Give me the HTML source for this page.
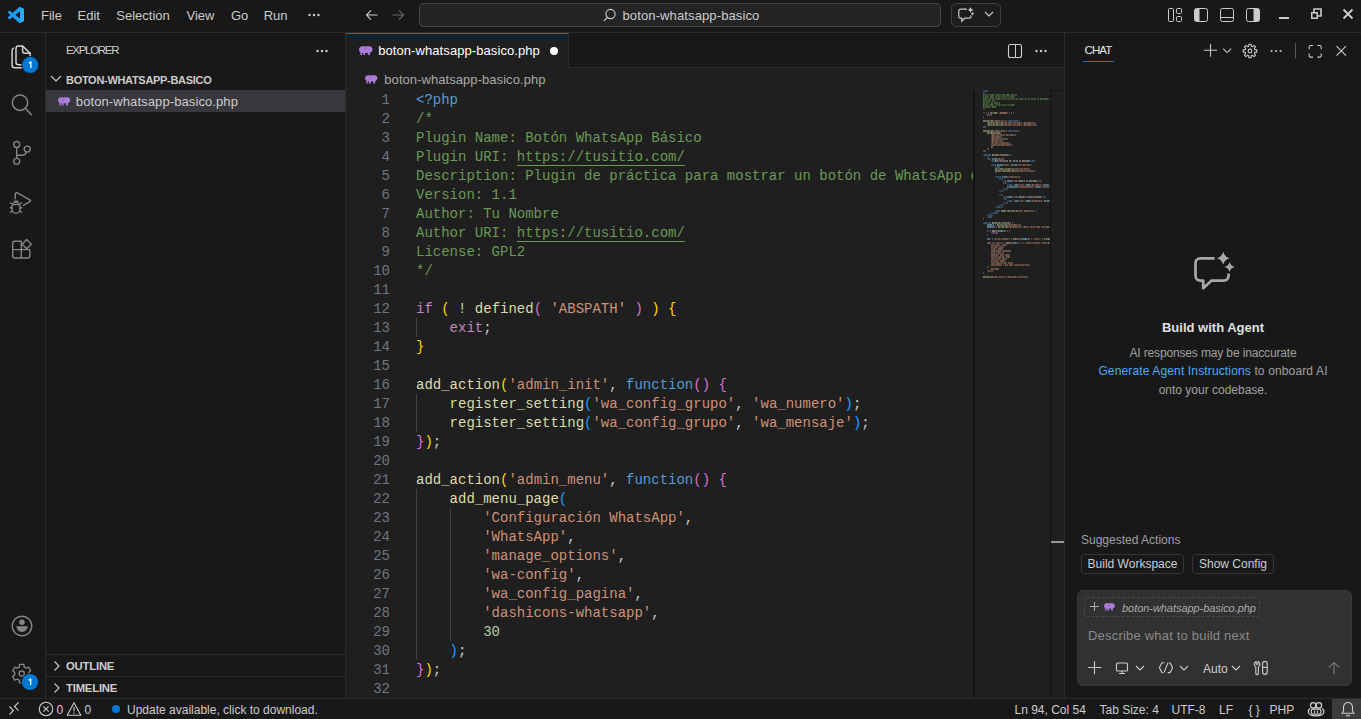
<!DOCTYPE html>
<html><head><meta charset="utf-8"><style>
html,body{margin:0;padding:0}
body{width:1361px;height:719px;overflow:hidden;position:relative;background:#181818;font-family:"Liberation Sans",sans-serif}
.t{position:absolute;white-space:pre;line-height:16px}
.ln{position:absolute;left:346px;width:44px;text-align:right;font-family:"Liberation Mono",monospace;font-size:14px;line-height:19px;color:#6E7681}
.cl{position:absolute;left:0;white-space:pre;font-family:"Liberation Mono",monospace;font-size:14px;line-height:19px;color:#CCCCCC}
</style></head><body>
<div style="position:absolute;left:0;top:0;width:1361px;height:32px;background:#181818"></div>
<div style="position:absolute;left:0;top:32px;width:1361px;height:1px;background:#2B2B2B"></div>
<svg style="position:absolute;left:8px;top:7px" width="16" height="16" viewBox="0 0 100 100"><path fill="#0065A9" d="M96.5 10.8 75.9.9a6.2 6.2 0 0 0-7.1 1.2L29.4 38 12.2 25a4.2 4.2 0 0 0-5.3.2l-5.5 5a4.2 4.2 0 0 0 0 6.2L16.3 50 1.4 63.6a4.2 4.2 0 0 0 0 6.2l5.5 5a4.2 4.2 0 0 0 5.3.2l17.2-13 39.4 35.9a6.2 6.2 0 0 0 7.1 1.2l20.6-9.9a6.2 6.2 0 0 0 3.5-5.6V16.4a6.2 6.2 0 0 0-3.5-5.6zM75 72.7 45.1 50 75 27.3z"/><path fill="#1F9CF0" d="M96.5 10.8 75.9.9a6.2 6.2 0 0 0-7.1 1.2L1.4 63.6a4.2 4.2 0 0 0 0 6.2l5.5 5a4.2 4.2 0 0 0 5.3.2L93.4 12.6A4.2 4.2 0 0 1 100 16v.4a6.2 6.2 0 0 0-3.5-5.6z"/><path fill="#1F9CF0" d="M96.5 89.2 75.9 99.1a6.2 6.2 0 0 1-7.1-1.2L1.4 36.4a4.2 4.2 0 0 1 0-6.2l5.5-5a4.2 4.2 0 0 1 5.3-.2l81.2 62.4A4.2 4.2 0 0 0 100 84v-.4a6.2 6.2 0 0 1-3.5 5.6z"/><path fill="#2AAAF5" d="M75.9 99.1a6.2 6.2 0 0 1-7.1-1.2A3.7 3.7 0 0 0 75 95.3V4.7a3.7 3.7 0 0 0-6.2-2.6 6.2 6.2 0 0 1 7.1-1.2l20.6 9.9a6.2 6.2 0 0 1 3.5 5.6v67.2a6.2 6.2 0 0 1-3.5 5.6z"/></svg>
<div class="t" style="left:41px;top:8px;font-size:13px;color:#CCCCCC;font-weight:400;">File</div>
<div class="t" style="left:77.5px;top:8px;font-size:13px;color:#CCCCCC;font-weight:400;">Edit</div>
<div class="t" style="left:116.3px;top:8px;font-size:13px;color:#CCCCCC;font-weight:400;">Selection</div>
<div class="t" style="left:186.5px;top:8px;font-size:13px;color:#CCCCCC;font-weight:400;">View</div>
<div class="t" style="left:231px;top:8px;font-size:13px;color:#CCCCCC;font-weight:400;">Go</div>
<div class="t" style="left:263.7px;top:8px;font-size:13px;color:#CCCCCC;font-weight:400;">Run</div>
<svg style="position:absolute;left:308px;top:13px" width="12" height="4"><circle cx="1.5" cy="2" r="1.2" fill="#CCC"/><circle cx="6" cy="2" r="1.2" fill="#CCC"/><circle cx="10.5" cy="2" r="1.2" fill="#CCC"/></svg>
<svg style="position:absolute;left:364px;top:7px" width="16" height="16" viewBox="0 0 16 16"><path d="M2.5 8h11M7 3.3 2.5 8 7 12.7" stroke="#CCCCCC" stroke-width="1.1" fill="none"/></svg>
<svg style="position:absolute;left:390px;top:7px" width="16" height="16" viewBox="0 0 16 16"><path d="M2.5 8h11M9 3.3 13.5 8 9 12.7" stroke="#6b6b6b" stroke-width="1.1" fill="none"/></svg>
<div style="position:absolute;left:419px;top:3px;width:520px;height:22px;border:1px solid #454545;border-radius:4.5px;background:#242424"></div>
<svg style="position:absolute;left:603px;top:8px" width="14" height="14" viewBox="0 0 14 14"><circle cx="7.5" cy="6" r="4.6" stroke="#CCCCCC" stroke-width="1.1" fill="none"/><path d="M4.3 9.3 1 12.8" stroke="#CCCCCC" stroke-width="1.2"/></svg>
<div class="t" style="left:622.5px;top:8px;font-size:13px;color:#CCCCCC;font-weight:400;letter-spacing:0.12px">boton-whatsapp-basico</div>
<div style="position:absolute;left:951px;top:3px;width:48px;height:22px;border:1px solid #3f3f3f;border-radius:5px;background:#1d1d1d"></div>
<svg style="position:absolute;left:957px;top:6px" width="18" height="17" viewBox="0 0 18 17"><path d="M10 3.2H3.6c-1.1 0-1.8.7-1.8 1.8v5.4c0 1.1.7 1.8 1.8 1.8h1.2v3l3-3h4.4c1.1 0 1.8-.7 1.8-1.8V9.2" stroke="#CCCCCC" stroke-width="1.2" fill="none"/><path d="M13.5 1l.9 2 2 .9-2 .9-.9 2-.9-2-2-.9 2-.9z M15.5 5.8l.6 1.2 1.2.6-1.2.6-.6 1.2-.6-1.2-1.2-.6 1.2-.6z" fill="#CCCCCC"/></svg>
<svg style="position:absolute;left:984px;top:11px" width="10" height="6" viewBox="0 0 10 6"><path d="M1 1l4 4 4-4" stroke="#CCCCCC" stroke-width="1.1" fill="none"/></svg>
<svg style="position:absolute;left:1167px;top:7px" width="16" height="16" viewBox="0 0 16 16"><rect x="1.5" y="1.5" width="5" height="13" rx="1" stroke="#CCC" fill="none"/><rect x="9.5" y="1.5" width="5" height="5" rx="1" stroke="#CCC" fill="none"/><rect x="9.5" y="9.5" width="5" height="5" rx="1" stroke="#CCC" fill="none"/></svg>
<svg style="position:absolute;left:1193px;top:7px" width="16" height="16" viewBox="0 0 16 16"><rect x="1.5" y="1.5" width="13" height="13" rx="2" stroke="#CCC" fill="none"/><path d="M2 2h4v12H2z" fill="#CCC"/><path d="M6 2v12" stroke="#CCC"/></svg>
<svg style="position:absolute;left:1219px;top:7px" width="16" height="16" viewBox="0 0 16 16"><rect x="1.5" y="1.5" width="13" height="13" rx="2" stroke="#CCC" fill="none"/><path d="M2 10.5h12" stroke="#CCC"/></svg>
<svg style="position:absolute;left:1245px;top:7px" width="16" height="16" viewBox="0 0 16 16"><rect x="1.5" y="1.5" width="13" height="13" rx="2" stroke="#CCC" fill="none"/><path d="M9 2h5v12H9z" fill="#CCC"/><path d="M9 2v12" stroke="#CCC"/></svg>
<div style="position:absolute;left:1279px;top:17px;width:10px;height:2px;background:#CCCCCC"></div>
<svg style="position:absolute;left:1310px;top:8px" width="12" height="12" viewBox="0 0 12 12"><rect x="1" y="4" width="7" height="7" fill="#CCC"/><rect x="2.5" y="5.5" width="4" height="4" fill="#181818"/><path d="M4 4V1h7v7H8" stroke="#CCC" stroke-width="1.6" fill="none"/></svg>
<svg style="position:absolute;left:1342px;top:8px" width="12" height="12" viewBox="0 0 12 12"><path d="M1.5 1.5l9 9M10.5 1.5l-9 9" stroke="#CCC" stroke-width="1.8"/></svg>
<div style="position:absolute;left:45px;top:33px;width:1px;height:665px;background:#2B2B2B"></div>
<svg style="position:absolute;left:0;top:0" width="45" height="719"><path d="M16 48.5a2.5 2.5 0 0 1 2.5-2.5H22.6L30.2 53.4V62.3a2.5 2.5 0 0 1-2.5 2.5H18.5a2.5 2.5 0 0 1-2.5-2.5Z" stroke="#D4D4D4" stroke-width="1.45" fill="none"/><path d="M22.6 46V50.9a2.3 2.3 0 0 0 2.3 2.3H30.2" stroke="#D4D4D4" stroke-width="1.45" fill="none"/><path d="M14 47.9Q12.1 48.5 12.1 50.6V65.3a2.5 2.5 0 0 0 2.5 2.5H24" stroke="#D4D4D4" stroke-width="1.45" fill="none"/><circle cx="30.2" cy="64.9" r="9" fill="#181818"/><circle cx="30.2" cy="64.9" r="8.1" fill="#0078D4"/><circle cx="20" cy="102.7" r="7.7" stroke="#858585" stroke-width="1.5" fill="none"/><path d="M25.4 108.3 31.8 115.2" stroke="#858585" stroke-width="1.6"/><g stroke="#858585" stroke-width="1.35" fill="none"><circle cx="16.7" cy="144.5" r="3"/><circle cx="16.7" cy="161.3" r="3"/><circle cx="27.2" cy="149.1" r="3"/><path d="M16.7 147.5V158.3M16.7 155.2H23.3a3.3 3.3 0 0 0 2.7-3.4"/></g><g stroke="#858585" stroke-width="1.4" fill="none" stroke-linejoin="round"><path d="M15.2 199.2V194.2a1.5 1.5 0 0 1 2.2-1.3L30.2 200.2a.7.7 0 0 1 0 1.2L23 205.6"/><path d="M12 207.3a4 5 0 0 1 8 0v1.8a4 4.3 0 0 1-8 0z"/><path d="M12.3 204.6H19.7M13.8 202.3a2.3 2 0 0 1 4.4 0"/><path d="M12 203.8 10 202.5M20 203.8 22 202.5M12 207.8H9.8M20 207.8H22.2M12.2 211 10 212.6M19.8 211 22 212.6"/></g><g stroke="#858585" stroke-width="1.4" fill="none" stroke-linejoin="round"><path d="M14.7 241.2H21.3V258H14.7a2 2 0 0 1-2-2V243.2a2 2 0 0 1 2-2z"/><path d="M12.7 249.6H29.8V256a2 2 0 0 1-2 2H21.3"/><path d="M26.7 239.6 31.3 244.2 26.7 248.8 22.1 244.2z"/></g><circle cx="22" cy="626" r="9.8" stroke="#858585" stroke-width="1.4" fill="none"/><circle cx="22" cy="622.2" r="2.7" fill="#858585"/><path d="M16.3 626.3H27.7a5.7 5.7 0 0 1-11.4 0z" fill="#858585"/><path d="M19.19 667.06 L19.56 664.34 L23.84 664.34 L24.21 667.06 L26.11 668.16 L28.65 667.12 L30.78 670.82 L28.61 672.50 L28.61 674.70 L30.78 676.38 L28.65 680.08 L26.11 679.04 L24.21 680.14 L23.84 682.86 L19.56 682.86 L19.19 680.14 L17.29 679.04 L14.75 680.08 L12.62 676.38 L14.79 674.70 L14.79 672.50 L12.62 670.82 L14.75 667.12 L17.29 668.16Z" stroke="#858585" stroke-width="1.35" fill="none" stroke-linejoin="round"/><circle cx="21.7" cy="673.6" r="2.6" stroke="#858585" stroke-width="1.35" fill="none"/><circle cx="30" cy="682" r="9" fill="#181818"/><circle cx="30" cy="682" r="8.1" fill="#0078D4"/><path d="M28.9 63.3 30.9 61.9V67.9M28.7 680.4 30.7 679V685" stroke="#FFFFFF" stroke-width="1.3" fill="none" stroke-linejoin="round"/></svg>
<div style="position:absolute;left:345px;top:33px;width:1px;height:665px;background:#2B2B2B"></div>
<div class="t" style="left:66px;top:41.8px;font-size:11.5px;color:#CCCCCC;font-weight:400;letter-spacing:-1.3px">EXPLORER</div>
<svg style="position:absolute;left:316px;top:49px" width="12" height="4"><circle cx="1.5" cy="2" r="1.2" fill="#CCC"/><circle cx="6" cy="2" r="1.2" fill="#CCC"/><circle cx="10.5" cy="2" r="1.2" fill="#CCC"/></svg>
<svg style="position:absolute;left:50px;top:74px" width="12" height="9" viewBox="0 0 12 9"><path d="M1 2l5 5 5-5" stroke="#CCC" stroke-width="1.1" fill="none"/></svg>
<div class="t" style="left:66px;top:72px;font-size:11px;color:#CCCCCC;font-weight:700;letter-spacing:-0.3px">BOTON-WHATSAPP-BASICO</div>
<div style="position:absolute;left:46px;top:90px;width:299px;height:22px;background:#37373D"></div>
<svg style="position:absolute;left:57.5px;top:97.2px" width="12.4" height="8.8" viewBox="0 0 14 10"><path fill="#AC7DD8" d="M3.3.3C1.3.3 0 1.8 0 3.7c0 1.3.6 2.3 1.4 2.8v3.2H3V7.1c.4.2.9.2 1.3.1v2.5h2V7.2h2.9v2.5h2.1V6.9c1.5-.4 2.6-1.6 2.6-3.4C13.9 1.5 12.4.3 10.4.3z"/><path d="M6.3.6C6.6 2 6.2 3.6 5 4.6" stroke="#7C58A6" stroke-width=".7" fill="none"/></svg>
<div class="t" style="left:75.8px;top:94px;font-size:13px;color:#CCCCCC;font-weight:400;letter-spacing:0.1px">boton-whatsapp-basico.php</div>
<div style="position:absolute;left:46px;top:654px;width:299px;height:1px;background:#2B2B2B"></div>
<div style="position:absolute;left:46px;top:676px;width:299px;height:1px;background:#2B2B2B"></div>
<svg style="position:absolute;left:52px;top:660px" width="10" height="12" viewBox="0 0 10 12"><path d="M2.5 1.5l4.5 4.5-4.5 4.5" stroke="#CCC" stroke-width="1.1" fill="none"/></svg>
<svg style="position:absolute;left:52px;top:682px" width="10" height="12" viewBox="0 0 10 12"><path d="M2.5 1.5l4.5 4.5-4.5 4.5" stroke="#CCC" stroke-width="1.1" fill="none"/></svg>
<div class="t" style="left:66px;top:657.8px;font-size:11.3px;color:#CCCCCC;font-weight:700;letter-spacing:-0.2px">OUTLINE</div>
<div class="t" style="left:66px;top:679.8px;font-size:11.3px;color:#CCCCCC;font-weight:700;letter-spacing:-0.2px">TIMELINE</div>
<div style="position:absolute;left:346px;top:33px;width:718px;height:665px;background:#1F1F1F"></div>
<div style="position:absolute;left:346px;top:33px;width:718px;height:34px;background:#181818"></div>
<div style="position:absolute;left:346px;top:67px;width:718px;height:1px;background:#2B2B2B"></div>
<div style="position:absolute;left:346px;top:33px;width:223px;height:35px;background:#1F1F1F;border-right:1px solid #2B2B2B;box-sizing:border-box"></div>
<div style="position:absolute;left:346px;top:33px;width:222px;height:1px;background:#0078D4"></div>
<svg style="position:absolute;left:359px;top:45.8px" width="13.6" height="9.7" viewBox="0 0 14 10"><path fill="#AC7DD8" d="M3.3.3C1.3.3 0 1.8 0 3.7c0 1.3.6 2.3 1.4 2.8v3.2H3V7.1c.4.2.9.2 1.3.1v2.5h2V7.2h2.9v2.5h2.1V6.9c1.5-.4 2.6-1.6 2.6-3.4C13.9 1.5 12.4.3 10.4.3z"/><path d="M6.3.6C6.6 2 6.2 3.6 5 4.6" stroke="#7C58A6" stroke-width=".7" fill="none"/></svg>
<div class="t" style="left:378.2px;top:43px;font-size:13px;color:#FFFFFF;font-weight:400;letter-spacing:0.08px">boton-whatsapp-basico.php</div>
<div style="position:absolute;left:550px;top:47px;width:8px;height:8px;border-radius:4px;background:#FFFFFF"></div>
<svg style="position:absolute;left:1007px;top:43px" width="16" height="16" viewBox="0 0 16 16"><rect x="1.5" y="1.5" width="13" height="13" rx="2" stroke="#CCC" stroke-width="1.1" fill="none"/><path d="M8.5 2v12" stroke="#CCC" stroke-width="1"/></svg>
<svg style="position:absolute;left:1035px;top:49px" width="12" height="4"><circle cx="1.5" cy="2" r="1.2" fill="#CCC"/><circle cx="6" cy="2" r="1.2" fill="#CCC"/><circle cx="10.5" cy="2" r="1.2" fill="#CCC"/></svg>
<svg style="position:absolute;left:365.4px;top:75.2px" width="12.6" height="8.9" viewBox="0 0 14 10"><path fill="#AC7DD8" d="M3.3.3C1.3.3 0 1.8 0 3.7c0 1.3.6 2.3 1.4 2.8v3.2H3V7.1c.4.2.9.2 1.3.1v2.5h2V7.2h2.9v2.5h2.1V6.9c1.5-.4 2.6-1.6 2.6-3.4C13.9 1.5 12.4.3 10.4.3z"/><path d="M6.3.6C6.6 2 6.2 3.6 5 4.6" stroke="#7C58A6" stroke-width=".7" fill="none"/></svg>
<div class="t" style="left:384.3px;top:72px;font-size:13px;color:#A9A9A9;font-weight:400;letter-spacing:0.06px">boton-whatsapp-basico.php</div>
<div class="ln" style="top:91px">1</div>
<div class="ln" style="top:110px">2</div>
<div class="ln" style="top:129px">3</div>
<div class="ln" style="top:148px">4</div>
<div class="ln" style="top:167px">5</div>
<div class="ln" style="top:186px">6</div>
<div class="ln" style="top:205px">7</div>
<div class="ln" style="top:224px">8</div>
<div class="ln" style="top:243px">9</div>
<div class="ln" style="top:262px">10</div>
<div class="ln" style="top:281px">11</div>
<div class="ln" style="top:300px">12</div>
<div class="ln" style="top:319px">13</div>
<div class="ln" style="top:338px">14</div>
<div class="ln" style="top:357px">15</div>
<div class="ln" style="top:376px">16</div>
<div class="ln" style="top:395px">17</div>
<div class="ln" style="top:414px">18</div>
<div class="ln" style="top:433px">19</div>
<div class="ln" style="top:452px">20</div>
<div class="ln" style="top:471px">21</div>
<div class="ln" style="top:490px">22</div>
<div class="ln" style="top:509px">23</div>
<div class="ln" style="top:528px">24</div>
<div class="ln" style="top:547px">25</div>
<div class="ln" style="top:566px">26</div>
<div class="ln" style="top:585px">27</div>
<div class="ln" style="top:604px">28</div>
<div class="ln" style="top:623px">29</div>
<div class="ln" style="top:642px">30</div>
<div class="ln" style="top:661px">31</div>
<div class="ln" style="top:680px">32</div>
<div style="position:absolute;left:416px;top:318px;width:1px;height:19px;background:#404040"></div>
<div style="position:absolute;left:416px;top:394px;width:1px;height:38px;background:#404040"></div>
<div style="position:absolute;left:416px;top:489px;width:1px;height:171px;background:#404040"></div>
<div style="position:absolute;left:450px;top:508px;width:1px;height:133px;background:#404040"></div>
<div style="position:absolute;left:416px;top:91px;width:557px;height:607px;overflow:hidden">
<div class="cl" style="top:0px"><span style="color:#569CD6">&lt;?php</span></div>
<div class="cl" style="top:19px"><span style="color:#6A9955">/*</span></div>
<div class="cl" style="top:38px"><span style="color:#6A9955">Plugin Name: Botón WhatsApp Básico</span></div>
<div class="cl" style="top:57px"><span style="color:#6A9955">Plugin URI: </span><span style="color:#6A9955;text-decoration:underline;text-underline-offset:4px">https://tusitio.com/</span></div>
<div class="cl" style="top:76px"><span style="color:#6A9955">Description: Plugin de práctica para mostrar un botón de WhatsApp con configuración</span></div>
<div class="cl" style="top:95px"><span style="color:#6A9955">Version: 1.1</span></div>
<div class="cl" style="top:114px"><span style="color:#6A9955">Author: Tu Nombre</span></div>
<div class="cl" style="top:133px"><span style="color:#6A9955">Author URI: </span><span style="color:#6A9955;text-decoration:underline;text-underline-offset:4px">https://tusitio.com/</span></div>
<div class="cl" style="top:152px"><span style="color:#6A9955">License: GPL2</span></div>
<div class="cl" style="top:171px"><span style="color:#6A9955">*/</span></div>
<div class="cl" style="top:190px"></div>
<div class="cl" style="top:209px"><span style="color:#C586C0">if</span><span style="color:#CCCCCC"> </span><span style="color:#FFD700">(</span><span style="color:#CCCCCC"> ! </span><span style="color:#DCDCAA">defined</span><span style="color:#DA70D6">(</span><span style="color:#CE9178"> &#x27;ABSPATH&#x27; </span><span style="color:#DA70D6">)</span><span style="color:#CCCCCC"> </span><span style="color:#FFD700">)</span><span style="color:#CCCCCC"> </span><span style="color:#FFD700">{</span></div>
<div class="cl" style="top:228px"><span style="color:#CCCCCC">    </span><span style="color:#C586C0">exit</span><span style="color:#CCCCCC">;</span></div>
<div class="cl" style="top:247px"><span style="color:#FFD700">}</span></div>
<div class="cl" style="top:266px"></div>
<div class="cl" style="top:285px"><span style="color:#DCDCAA">add_action</span><span style="color:#FFD700">(</span><span style="color:#CE9178">&#x27;admin_init&#x27;</span><span style="color:#CCCCCC">, </span><span style="color:#569CD6">function</span><span style="color:#DA70D6">()</span><span style="color:#CCCCCC"> </span><span style="color:#DA70D6">{</span></div>
<div class="cl" style="top:304px"><span style="color:#DCDCAA">    register_setting</span><span style="color:#179FFF">(</span><span style="color:#CE9178">&#x27;wa_config_grupo&#x27;</span><span style="color:#CCCCCC">, </span><span style="color:#CE9178">&#x27;wa_numero&#x27;</span><span style="color:#179FFF">)</span><span style="color:#CCCCCC">;</span></div>
<div class="cl" style="top:323px"><span style="color:#DCDCAA">    register_setting</span><span style="color:#179FFF">(</span><span style="color:#CE9178">&#x27;wa_config_grupo&#x27;</span><span style="color:#CCCCCC">, </span><span style="color:#CE9178">&#x27;wa_mensaje&#x27;</span><span style="color:#179FFF">)</span><span style="color:#CCCCCC">;</span></div>
<div class="cl" style="top:342px"><span style="color:#DA70D6">}</span><span style="color:#FFD700">)</span><span style="color:#CCCCCC">;</span></div>
<div class="cl" style="top:361px"></div>
<div class="cl" style="top:380px"><span style="color:#DCDCAA">add_action</span><span style="color:#FFD700">(</span><span style="color:#CE9178">&#x27;admin_menu&#x27;</span><span style="color:#CCCCCC">, </span><span style="color:#569CD6">function</span><span style="color:#DA70D6">()</span><span style="color:#CCCCCC"> </span><span style="color:#DA70D6">{</span></div>
<div class="cl" style="top:399px"><span style="color:#DCDCAA">    add_menu_page</span><span style="color:#179FFF">(</span></div>
<div class="cl" style="top:418px"><span style="color:#CE9178">        &#x27;Configuración WhatsApp&#x27;</span><span style="color:#CCCCCC">,</span></div>
<div class="cl" style="top:437px"><span style="color:#CE9178">        &#x27;WhatsApp&#x27;</span><span style="color:#CCCCCC">,</span></div>
<div class="cl" style="top:456px"><span style="color:#CE9178">        &#x27;manage_options&#x27;</span><span style="color:#CCCCCC">,</span></div>
<div class="cl" style="top:475px"><span style="color:#CE9178">        &#x27;wa-config&#x27;</span><span style="color:#CCCCCC">,</span></div>
<div class="cl" style="top:494px"><span style="color:#CE9178">        &#x27;wa_config_pagina&#x27;</span><span style="color:#CCCCCC">,</span></div>
<div class="cl" style="top:513px"><span style="color:#CE9178">        &#x27;dashicons-whatsapp&#x27;</span><span style="color:#CCCCCC">,</span></div>
<div class="cl" style="top:532px"><span style="color:#CCCCCC">        </span><span style="color:#B5CEA8">30</span></div>
<div class="cl" style="top:551px"><span style="color:#CCCCCC">    </span><span style="color:#179FFF">)</span><span style="color:#CCCCCC">;</span></div>
<div class="cl" style="top:570px"><span style="color:#DA70D6">}</span><span style="color:#FFD700">)</span><span style="color:#CCCCCC">;</span></div>
<div class="cl" style="top:589px"></div>
</div>
<div style="position:absolute;left:973px;top:90px;width:2px;height:608px;background:linear-gradient(to right,rgba(0,0,0,0.2),rgba(0,0,0,0.6))"></div>
<svg style="position:absolute;left:0;top:0" width="1361" height="719"><path d="M983 90h2v2h-2zM1008 120h1v2h-1zM1012 120h2v2h-2zM1008 130h1v2h-1zM1012 130h2v2h-2zM983 154h1v2h-1zM987 154h2v2h-2zM987 156h2v2h-2zM987 158h1v2h-1zM989 158h1v2h-1zM991 160h1v2h-1zM1030 160h2v2h-2zM991 164h2v2h-2zM994 164h1v2h-1zM995 166h2v2h-2zM995 172h2v2h-2zM995 176h2v2h-2zM999 176h1v2h-1zM999 178h3v2h-3zM1003 180h2v2h-2zM1037 180h3v2h-3zM1003 182h2v2h-2zM1007 184h2v2h-2zM1012 184h1v2h-1zM1003 188h3v2h-3zM999 190h4v2h-4zM999 194h3v2h-3zM1003 196h2v2h-2zM1041 196h3v2h-3zM1003 198h2v2h-2zM1007 200h2v2h-2zM1012 200h1v2h-1zM1003 202h3v2h-3zM999 204h4v2h-4zM995 206h3v2h-3zM1000 206h1v2h-1zM995 210h2v2h-2zM1035 210h2v2h-2zM991 212h3v2h-3zM995 212h1v2h-1zM987 214h2v2h-2zM990 214h1v2h-1zM987 216h2v2h-2zM983 222h1v2h-1zM987 222h2v2h-2z" fill="#569CD6" fill-opacity="0.26"/><path d="M985 90h3v2h-3zM1009 120h3v2h-3zM1014 120h2v2h-2zM1009 130h3v2h-3zM1014 130h2v2h-2zM984 154h3v2h-3zM989 154h2v2h-2zM988 158h1v2h-1zM990 158h1v2h-1zM992 160h2v2h-2zM1032 160h2v2h-2zM993 164h1v2h-1zM997 166h3v2h-3zM997 176h2v2h-2zM1000 176h1v2h-1zM1005 180h1v2h-1zM1040 180h1v2h-1zM1005 182h1v2h-1zM1009 184h3v2h-3zM1006 188h1v2h-1zM1005 196h1v2h-1zM1044 196h1v2h-1zM1005 198h1v2h-1zM1009 200h3v2h-3zM1006 202h1v2h-1zM998 206h2v2h-2zM1001 206h1v2h-1zM997 210h3v2h-3zM994 212h1v2h-1zM989 214h1v2h-1zM991 214h1v2h-1zM989 216h3v2h-3zM984 222h3v2h-3zM989 222h2v2h-2z" fill="#569CD6" fill-opacity="0.42"/><path d="M983 92h2v2h-2zM984 94h1v2h-1zM987 94h1v2h-1zM994 94h1v2h-1zM998 94h1v2h-1zM1005 94h1v2h-1zM1014 94h1v2h-1zM984 96h1v2h-1zM987 96h1v2h-1zM993 96h1v2h-1zM996 96h2v2h-2zM1000 96h4v2h-4zM1006 96h3v2h-3zM1010 96h1v2h-1zM1014 96h1v2h-1zM987 98h2v2h-2zM990 98h2v2h-2zM994 98h1v2h-1zM997 98h1v2h-1zM1000 98h1v2h-1zM1007 98h1v2h-1zM1010 98h2v2h-2zM1017 98h1v2h-1zM1023 98h2v2h-2zM1026 98h1v2h-1zM1033 98h1v2h-1zM1043 98h1v2h-1zM985 100h1v2h-1zM987 100h1v2h-1zM990 100h1v2h-1zM993 100h1v2h-1zM985 102h1v2h-1zM988 102h2v2h-2zM998 102h1v2h-1zM985 104h1v2h-1zM988 104h1v2h-1zM993 104h1v2h-1zM996 104h2v2h-2zM1000 104h4v2h-4zM1006 104h3v2h-3zM1010 104h1v2h-1zM1014 104h1v2h-1zM984 106h1v2h-1zM990 106h1v2h-1zM983 108h2v2h-2z" fill="#6A9955" fill-opacity="0.26"/><path d="M983 94h1v2h-1zM990 94h1v2h-1zM992 94h1v2h-1zM996 94h1v2h-1zM1002 94h1v2h-1zM1007 94h1v2h-1zM1011 94h1v2h-1zM983 96h1v2h-1zM990 96h3v2h-3zM1013 96h1v2h-1zM983 98h1v2h-1zM996 98h1v2h-1zM1020 98h1v2h-1zM1040 98h1v2h-1zM1045 98h1v2h-1zM983 100h1v2h-1zM983 102h1v2h-1zM991 102h1v2h-1zM994 102h1v2h-1zM996 102h1v2h-1zM983 104h1v2h-1zM990 104h3v2h-3zM1013 104h1v2h-1zM983 106h1v2h-1zM992 106h3v2h-3z" fill="#6A9955" fill-opacity="0.55"/><path d="M985 94h2v2h-2zM988 94h1v2h-1zM991 94h1v2h-1zM993 94h1v2h-1zM997 94h1v2h-1zM999 94h2v2h-2zM1003 94h2v2h-2zM1006 94h1v2h-1zM1008 94h2v2h-2zM1012 94h2v2h-2zM1015 94h2v2h-2zM985 96h2v2h-2zM988 96h1v2h-1zM995 96h1v2h-1zM998 96h2v2h-2zM1004 96h2v2h-2zM1009 96h1v2h-1zM1011 96h2v2h-2zM984 98h3v2h-3zM989 98h1v2h-1zM992 98h2v2h-2zM998 98h2v2h-2zM1001 98h1v2h-1zM1003 98h2v2h-2zM1006 98h1v2h-1zM1008 98h2v2h-2zM1012 98h2v2h-2zM1015 98h2v2h-2zM1018 98h1v2h-1zM1021 98h2v2h-2zM1025 98h1v2h-1zM1028 98h2v2h-2zM1031 98h2v2h-2zM1034 98h2v2h-2zM1037 98h2v2h-2zM1041 98h2v2h-2zM1044 98h1v2h-1zM1046 98h2v2h-2zM1049 98h1v2h-1zM984 100h1v2h-1zM986 100h1v2h-1zM988 100h2v2h-2zM992 100h1v2h-1zM994 100h1v2h-1zM984 102h1v2h-1zM986 102h2v2h-2zM992 102h1v2h-1zM995 102h1v2h-1zM997 102h1v2h-1zM999 102h1v2h-1zM984 104h1v2h-1zM986 104h2v2h-2zM995 104h1v2h-1zM998 104h2v2h-2zM1004 104h2v2h-2zM1009 104h1v2h-1zM1011 104h2v2h-2zM985 106h5v2h-5zM995 106h1v2h-1z" fill="#6A9955" fill-opacity="0.42"/><path d="M983 112h2v2h-2zM989 114h2v2h-2zM987 230h2v2h-2zM991 232h1v2h-1zM993 232h1v2h-1zM995 232h1v2h-1z" fill="#C586C0" fill-opacity="0.26"/><path d="M986 112h1v2h-1zM988 112h1v2h-1zM997 112h1v2h-1zM1009 112h1v2h-1zM1011 112h1v2h-1zM1013 112h1v2h-1zM991 114h1v2h-1zM983 116h1v2h-1zM993 120h1v2h-1zM1006 120h1v2h-1zM1016 120h2v2h-2zM1019 120h1v2h-1zM1003 122h1v2h-1zM1021 122h1v2h-1zM1034 122h2v2h-2zM1003 124h1v2h-1zM1021 124h1v2h-1zM1035 124h2v2h-2zM983 126h3v2h-3zM993 130h1v2h-1zM1006 130h1v2h-1zM1016 130h2v2h-2zM1019 130h1v2h-1zM1000 132h1v2h-1zM1015 134h1v2h-1zM1001 136h1v2h-1zM1007 138h1v2h-1zM1002 140h1v2h-1zM1009 142h1v2h-1zM1011 144h1v2h-1zM987 148h2v2h-2zM983 150h3v2h-3zM1008 154h2v2h-2zM1011 154h1v2h-1zM997 158h1v2h-1zM998 160h2v2h-2zM1002 160h1v2h-1zM1005 160h1v2h-1zM1011 160h1v2h-1zM1015 160h1v2h-1zM1025 160h1v2h-1zM1003 164h1v2h-1zM1017 164h1v2h-1zM1010 168h1v2h-1zM1028 168h2v2h-2zM1015 170h1v2h-1zM1033 170h2v2h-2zM1007 176h1v2h-1zM1012 180h1v2h-1zM1023 180h1v2h-1zM1032 180h1v2h-1zM1018 184h1v2h-1zM1030 184h1v2h-1zM1048 184h1v2h-1zM1018 186h1v2h-1zM1040 186h1v2h-1zM1012 196h1v2h-1zM1024 196h1v2h-1zM1028 196h1v2h-1zM1032 196h1v2h-1zM1034 196h1v2h-1zM1036 196h1v2h-1zM1018 200h1v2h-1zM1030 200h1v2h-1zM1049 200h1v2h-1zM1014 210h1v2h-1zM1032 210h2v2h-2zM983 218h1v2h-1zM1009 222h2v2h-2zM1012 222h1v2h-1zM995 224h1v2h-1zM1007 224h1v2h-1zM1019 224h2v2h-2zM996 226h1v2h-1zM1008 226h1v2h-1zM1021 226h1v2h-1zM990 230h1v2h-1zM997 230h1v2h-1zM1005 230h1v2h-1zM1007 230h1v2h-1zM1009 230h1v2h-1zM997 232h1v2h-1zM987 234h1v2h-1zM992 238h1v2h-1zM1011 238h1v2h-1zM1021 238h1v2h-1zM1029 238h1v2h-1zM1031 238h1v2h-1zM1042 238h1v2h-1zM1004 242h1v2h-1zM1013 242h1v2h-1zM1018 242h1v2h-1zM1020 242h1v2h-1zM1006 244h1v2h-1zM1003 246h1v2h-1zM1002 248h1v2h-1zM1010 250h1v2h-1zM1003 252h1v2h-1zM1009 254h1v2h-1zM1009 256h1v2h-1zM1006 258h1v2h-1zM1004 260h1v2h-1zM1012 262h1v2h-1zM1029 264h1v2h-1zM992 270h1v2h-1zM983 272h1v2h-1zM993 276h1v2h-1zM1005 276h1v2h-1zM1026 276h2v2h-2z" fill="#CCCCCC" fill-opacity="0.26"/><path d="M990 112h2v2h-2zM994 112h3v2h-3zM983 120h3v2h-3zM987 120h2v2h-2zM991 120h2v2h-2zM988 122h2v2h-2zM991 122h1v2h-1zM993 122h1v2h-1zM996 122h2v2h-2zM1001 122h2v2h-2zM988 124h2v2h-2zM991 124h1v2h-1zM993 124h1v2h-1zM996 124h2v2h-2zM1001 124h2v2h-2zM983 130h3v2h-3zM987 130h2v2h-2zM991 130h2v2h-2zM987 132h3v2h-3zM992 132h3v2h-3zM996 132h4v2h-4zM993 154h1v2h-1zM995 154h3v2h-3zM1000 154h1v2h-1zM1002 154h3v2h-3zM1006 154h2v2h-2zM995 168h2v2h-2zM1000 168h3v2h-3zM1006 168h1v2h-1zM1008 168h2v2h-2zM995 170h2v2h-2zM998 170h2v2h-2zM1003 170h3v2h-3zM1007 170h3v2h-3zM1012 170h3v2h-3zM1001 210h3v2h-3zM1008 210h2v2h-2zM1012 210h2v2h-2zM993 222h1v2h-1zM995 222h2v2h-2zM998 222h2v2h-2zM1003 222h1v2h-1zM1005 222h2v2h-2zM1008 222h1v2h-1zM997 224h2v2h-2zM1001 224h2v2h-2zM1005 224h2v2h-2zM998 226h2v2h-2zM1002 226h2v2h-2zM1006 226h2v2h-2zM992 230h1v2h-1zM994 230h1v2h-1zM996 230h1v2h-1zM1013 238h3v2h-3zM1017 238h1v2h-1zM1044 238h1v2h-1zM1047 238h3v2h-3zM1006 242h3v2h-3zM1010 242h1v2h-1zM983 276h3v2h-3zM987 276h2v2h-2zM991 276h2v2h-2z" fill="#DCDCAA" fill-opacity="0.42"/><path d="M992 112h2v2h-2zM986 120h1v2h-1zM989 120h2v2h-2zM987 122h1v2h-1zM990 122h1v2h-1zM992 122h1v2h-1zM994 122h2v2h-2zM998 122h3v2h-3zM987 124h1v2h-1zM990 124h1v2h-1zM992 124h1v2h-1zM994 124h2v2h-2zM998 124h3v2h-3zM986 130h1v2h-1zM989 130h2v2h-2zM990 132h1v2h-1zM995 132h1v2h-1zM994 154h1v2h-1zM998 154h2v2h-2zM1001 154h1v2h-1zM1005 154h1v2h-1zM997 168h3v2h-3zM1003 168h3v2h-3zM1007 168h1v2h-1zM997 170h1v2h-1zM1000 170h3v2h-3zM1006 170h1v2h-1zM1010 170h2v2h-2zM1005 210h3v2h-3zM1010 210h2v2h-2zM994 222h1v2h-1zM997 222h1v2h-1zM1000 222h3v2h-3zM1004 222h1v2h-1zM1007 222h1v2h-1zM999 224h2v2h-2zM1003 224h2v2h-2zM1000 226h2v2h-2zM1004 226h2v2h-2zM995 230h1v2h-1zM1016 238h1v2h-1zM1018 238h3v2h-3zM1045 238h2v2h-2zM1009 242h1v2h-1zM1011 242h2v2h-2zM986 276h1v2h-1zM989 276h2v2h-2z" fill="#DCDCAA" fill-opacity="0.26"/><path d="M999 112h1v2h-1zM1007 112h1v2h-1zM994 120h1v2h-1zM998 120h1v2h-1zM1000 120h2v2h-2zM1003 120h3v2h-3zM1004 122h1v2h-1zM1007 122h1v2h-1zM1011 122h2v2h-2zM1014 122h1v2h-1zM1016 122h1v2h-1zM1020 122h1v2h-1zM1023 122h1v2h-1zM1026 122h1v2h-1zM1031 122h1v2h-1zM1033 122h1v2h-1zM1004 124h1v2h-1zM1007 124h1v2h-1zM1011 124h2v2h-2zM1014 124h1v2h-1zM1016 124h1v2h-1zM1020 124h1v2h-1zM1023 124h1v2h-1zM1026 124h1v2h-1zM1032 124h1v2h-1zM1034 124h1v2h-1zM994 130h1v2h-1zM998 130h1v2h-1zM1000 130h1v2h-1zM1005 130h1v2h-1zM991 134h1v2h-1zM995 134h2v2h-2zM999 134h1v2h-1zM1002 134h1v2h-1zM1009 134h1v2h-1zM1014 134h1v2h-1zM991 136h1v2h-1zM995 136h1v2h-1zM1000 136h1v2h-1zM991 138h1v2h-1zM998 138h1v2h-1zM1001 138h2v2h-2zM1006 138h1v2h-1zM991 140h1v2h-1zM994 140h1v2h-1zM998 140h2v2h-2zM1001 140h1v2h-1zM991 142h1v2h-1zM994 142h1v2h-1zM998 142h2v2h-2zM1001 142h1v2h-1zM1005 142h1v2h-1zM1008 142h1v2h-1zM991 144h1v2h-1zM996 144h1v2h-1zM1001 144h1v2h-1zM1005 144h1v2h-1zM1010 144h1v2h-1zM998 158h1v2h-1zM1000 158h1v2h-1zM1003 158h1v2h-1zM1004 164h1v2h-1zM1008 164h2v2h-2zM1018 164h1v2h-1zM1021 164h2v2h-2zM1026 164h1v2h-1zM1030 164h1v2h-1zM1011 168h1v2h-1zM1014 168h1v2h-1zM1018 168h2v2h-2zM1021 168h1v2h-1zM1023 168h1v2h-1zM1027 168h1v2h-1zM1016 170h1v2h-1zM1019 170h1v2h-1zM1023 170h2v2h-2zM1026 170h1v2h-1zM1028 170h1v2h-1zM1032 170h1v2h-1zM1008 176h2v2h-2zM1011 176h1v2h-1zM1013 176h2v2h-2zM1017 176h1v2h-1zM1019 176h1v2h-1zM1013 180h2v2h-2zM1017 180h1v2h-1zM1019 184h2v2h-2zM1023 184h2v2h-2zM1031 184h1v2h-1zM1034 184h1v2h-1zM1039 184h1v2h-1zM1041 184h1v2h-1zM1049 184h1v2h-1zM1019 186h1v2h-1zM1033 186h1v2h-1zM1041 186h2v2h-2zM1046 186h1v2h-1zM1048 186h2v2h-2zM1013 196h2v2h-2zM1017 196h1v2h-1zM1019 200h2v2h-2zM1023 200h2v2h-2zM1031 200h1v2h-1zM1034 200h1v2h-1zM1040 200h1v2h-1zM1042 200h1v2h-1zM1015 210h1v2h-1zM1019 210h1v2h-1zM1022 210h1v2h-1zM1028 210h1v2h-1zM1031 210h1v2h-1zM1008 224h1v2h-1zM1011 224h1v2h-1zM1016 224h1v2h-1zM1018 224h1v2h-1zM1009 226h1v2h-1zM1012 226h1v2h-1zM1018 226h1v2h-1zM1020 226h1v2h-1zM1023 226h1v2h-1zM1026 226h1v2h-1zM1028 226h1v2h-1zM1032 226h1v2h-1zM1034 226h1v2h-1zM1041 226h1v2h-1zM1043 226h1v2h-1zM1045 226h1v2h-1zM1049 226h1v2h-1zM994 238h1v2h-1zM996 238h2v2h-2zM1000 238h3v2h-3zM1005 238h1v2h-1zM1008 238h2v2h-2zM1033 238h3v2h-3zM1038 238h3v2h-3zM992 242h2v2h-2zM997 242h1v2h-1zM999 242h4v2h-4zM1022 242h2v2h-2zM1025 242h1v2h-1zM1027 242h1v2h-1zM1030 242h4v2h-4zM1035 242h1v2h-1zM1039 242h1v2h-1zM1042 242h1v2h-1zM1046 242h2v2h-2zM994 244h3v2h-3zM999 244h1v2h-1zM1001 244h2v2h-2zM993 246h2v2h-2zM997 246h1v2h-1zM991 248h2v2h-2zM995 248h2v2h-2zM996 250h1v2h-1zM1001 250h1v2h-1zM993 252h1v2h-1zM995 252h2v2h-2zM1000 252h2v2h-2zM995 254h1v2h-1zM998 254h1v2h-1zM993 256h1v2h-1zM996 256h3v2h-3zM1001 256h1v2h-1zM1004 256h1v2h-1zM991 258h1v2h-1zM994 258h2v2h-2zM997 258h1v2h-1zM1000 258h1v2h-1zM992 260h2v2h-2zM998 260h1v2h-1zM991 262h1v2h-1zM994 262h2v2h-2zM1000 262h1v2h-1zM1002 262h2v2h-2zM1006 262h1v2h-1zM994 264h1v2h-1zM1001 264h1v2h-1zM1014 264h1v2h-1zM1018 264h1v2h-1zM1020 264h1v2h-1zM1022 264h1v2h-1zM1024 264h1v2h-1zM1026 264h1v2h-1zM1028 264h1v2h-1zM987 266h2v2h-2zM994 268h1v2h-1zM987 270h2v2h-2zM990 270h2v2h-2zM994 276h1v2h-1zM997 276h2v2h-2zM1001 276h1v2h-1zM1003 276h2v2h-2zM1007 276h1v2h-1zM1010 276h1v2h-1zM1013 276h1v2h-1zM1016 276h3v2h-3zM1020 276h1v2h-1zM1023 276h1v2h-1zM1025 276h1v2h-1z" fill="#CE9178" fill-opacity="0.26"/><path d="M1000 112h7v2h-7zM997 120h1v2h-1zM1005 122h1v2h-1zM1024 122h1v2h-1zM1029 122h1v2h-1zM1005 124h1v2h-1zM1024 124h1v2h-1zM1027 124h1v2h-1zM997 130h1v2h-1zM1001 130h1v2h-1zM992 134h1v2h-1zM1006 134h1v2h-1zM1011 134h1v2h-1zM992 136h1v2h-1zM997 136h1v2h-1zM992 138h1v2h-1zM992 140h1v2h-1zM992 142h1v2h-1zM1002 144h1v2h-1zM999 158h1v2h-1zM1012 168h1v2h-1zM1017 170h1v2h-1zM1012 176h1v2h-1zM1016 180h1v2h-1zM1032 184h1v2h-1zM1037 184h1v2h-1zM1016 196h1v2h-1zM1032 200h1v2h-1zM1035 200h1v2h-1zM1016 210h1v2h-1zM1026 210h1v2h-1zM1009 224h1v2h-1zM1014 224h1v2h-1zM1010 226h1v2h-1zM1013 226h1v2h-1zM1024 226h1v2h-1zM1037 226h1v2h-1zM1046 226h1v2h-1zM1003 238h1v2h-1zM1006 238h1v2h-1zM1048 242h1v2h-1zM996 246h1v2h-1zM1003 250h1v2h-1zM1006 250h1v2h-1zM998 252h1v2h-1zM1008 256h1v2h-1zM1000 264h1v2h-1zM991 268h1v2h-1zM996 268h1v2h-1zM995 276h1v2h-1zM1008 276h1v2h-1z" fill="#CE9178" fill-opacity="0.55"/><path d="M987 114h2v2h-2zM992 232h1v2h-1zM994 232h1v2h-1zM996 232h1v2h-1zM987 242h4v2h-4z" fill="#C586C0" fill-opacity="0.42"/><path d="M995 120h2v2h-2zM999 120h1v2h-1zM1002 120h1v2h-1zM1006 122h1v2h-1zM1008 122h3v2h-3zM1013 122h1v2h-1zM1015 122h1v2h-1zM1017 122h3v2h-3zM1025 122h1v2h-1zM1027 122h2v2h-2zM1030 122h1v2h-1zM1032 122h1v2h-1zM1006 124h1v2h-1zM1008 124h3v2h-3zM1013 124h1v2h-1zM1015 124h1v2h-1zM1017 124h3v2h-3zM1025 124h1v2h-1zM1028 124h4v2h-4zM1033 124h1v2h-1zM995 130h2v2h-2zM999 130h1v2h-1zM1002 130h3v2h-3zM993 134h2v2h-2zM997 134h2v2h-2zM1000 134h2v2h-2zM1003 134h2v2h-2zM1007 134h2v2h-2zM1010 134h1v2h-1zM1012 134h2v2h-2zM993 136h2v2h-2zM996 136h1v2h-1zM998 136h2v2h-2zM993 138h5v2h-5zM999 138h2v2h-2zM1003 138h3v2h-3zM993 140h1v2h-1zM995 140h3v2h-3zM1000 140h1v2h-1zM993 142h1v2h-1zM995 142h3v2h-3zM1000 142h1v2h-1zM1002 142h3v2h-3zM1006 142h2v2h-2zM992 144h4v2h-4zM997 144h4v2h-4zM1003 144h2v2h-2zM1006 144h4v2h-4zM1001 158h2v2h-2zM1005 164h3v2h-3zM1019 164h2v2h-2zM1023 164h3v2h-3zM1027 164h3v2h-3zM1013 168h1v2h-1zM1015 168h3v2h-3zM1020 168h1v2h-1zM1022 168h1v2h-1zM1024 168h3v2h-3zM1018 170h1v2h-1zM1020 170h3v2h-3zM1025 170h1v2h-1zM1027 170h1v2h-1zM1029 170h3v2h-3zM1010 176h1v2h-1zM1015 176h2v2h-2zM1018 176h1v2h-1zM1015 180h1v2h-1zM1021 184h2v2h-2zM1033 184h1v2h-1zM1035 184h2v2h-2zM1038 184h1v2h-1zM1040 184h1v2h-1zM1020 186h13v2h-13zM1043 186h3v2h-3zM1047 186h1v2h-1zM1015 196h1v2h-1zM1021 200h2v2h-2zM1033 200h1v2h-1zM1036 200h4v2h-4zM1041 200h1v2h-1zM1017 210h2v2h-2zM1020 210h2v2h-2zM1024 210h2v2h-2zM1027 210h1v2h-1zM1029 210h2v2h-2zM1010 224h1v2h-1zM1012 224h2v2h-2zM1015 224h1v2h-1zM1017 224h1v2h-1zM1011 226h1v2h-1zM1014 226h4v2h-4zM1019 226h1v2h-1zM1025 226h1v2h-1zM1027 226h1v2h-1zM1030 226h2v2h-2zM1033 226h1v2h-1zM1035 226h1v2h-1zM1038 226h2v2h-2zM1042 226h1v2h-1zM1044 226h1v2h-1zM1047 226h2v2h-2zM995 238h1v2h-1zM998 238h2v2h-2zM1004 238h1v2h-1zM1007 238h1v2h-1zM1036 238h2v2h-2zM994 242h1v2h-1zM996 242h1v2h-1zM998 242h1v2h-1zM1026 242h1v2h-1zM1028 242h2v2h-2zM1034 242h1v2h-1zM1036 242h3v2h-3zM1041 242h1v2h-1zM1043 242h3v2h-3zM1049 242h1v2h-1zM991 244h3v2h-3zM997 244h2v2h-2zM1003 244h3v2h-3zM991 246h2v2h-2zM995 246h1v2h-1zM999 246h4v2h-4zM993 248h2v2h-2zM998 248h4v2h-4zM991 250h5v2h-5zM997 250h4v2h-4zM1004 250h2v2h-2zM1007 250h3v2h-3zM991 252h2v2h-2zM994 252h1v2h-1zM999 252h1v2h-1zM1002 252h1v2h-1zM991 254h4v2h-4zM996 254h2v2h-2zM1000 254h4v2h-4zM1005 254h4v2h-4zM991 256h2v2h-2zM994 256h2v2h-2zM999 256h2v2h-2zM1002 256h2v2h-2zM1006 256h2v2h-2zM992 258h2v2h-2zM996 258h1v2h-1zM998 258h2v2h-2zM1002 258h4v2h-4zM991 260h1v2h-1zM994 260h4v2h-4zM1000 260h4v2h-4zM992 262h2v2h-2zM996 262h4v2h-4zM1001 262h1v2h-1zM1004 262h2v2h-2zM1008 262h4v2h-4zM991 264h3v2h-3zM995 264h5v2h-5zM1003 264h1v2h-1zM1005 264h3v2h-3zM1009 264h4v2h-4zM1015 264h3v2h-3zM1019 264h1v2h-1zM1021 264h1v2h-1zM1023 264h1v2h-1zM1025 264h1v2h-1zM1027 264h1v2h-1zM992 268h2v2h-2zM995 268h1v2h-1zM997 268h2v2h-2zM989 270h1v2h-1zM996 276h1v2h-1zM999 276h2v2h-2zM1002 276h1v2h-1zM1009 276h1v2h-1zM1011 276h2v2h-2zM1014 276h2v2h-2zM1019 276h1v2h-1zM1021 276h2v2h-2zM1024 276h1v2h-1z" fill="#CE9178" fill-opacity="0.42"/><path d="M991 132h1v2h-1zM992 154h1v2h-1zM1004 210h1v2h-1zM992 222h1v2h-1zM993 230h1v2h-1z" fill="#DCDCAA" fill-opacity="0.55"/><path d="M991 146h2v2h-2z" fill="#B5CEA8" fill-opacity="0.42"/><path d="M992 158h1v2h-1zM994 158h3v2h-3zM998 164h1v2h-1zM1000 164h3v2h-3zM1011 164h2v2h-2zM1015 164h2v2h-2zM1002 176h1v2h-1zM1004 176h3v2h-3zM1007 180h5v2h-5zM1015 184h3v2h-3zM1026 184h2v2h-2zM1029 184h1v2h-1zM1043 184h2v2h-2zM1046 184h2v2h-2zM1007 186h1v2h-1zM1009 186h5v2h-5zM1015 186h2v2h-2zM1035 186h1v2h-1zM1037 186h3v2h-3zM1007 196h5v2h-5zM1015 200h3v2h-3zM1026 200h2v2h-2zM1029 200h1v2h-1zM1044 200h2v2h-2zM1047 200h2v2h-2zM987 224h3v2h-3zM991 224h1v2h-1zM993 224h1v2h-1zM987 226h1v2h-1zM989 226h4v2h-4zM994 226h1v2h-1zM998 230h3v2h-3zM1002 230h1v2h-1zM1004 230h1v2h-1zM987 238h2v2h-2zM1022 238h3v2h-3zM1026 238h1v2h-1zM1028 238h1v2h-1zM1014 242h2v2h-2z" fill="#9CDCFE" fill-opacity="0.42"/><path d="M993 158h1v2h-1zM999 164h1v2h-1zM1013 164h2v2h-2zM1003 176h1v2h-1zM1014 184h1v2h-1zM1045 184h1v2h-1zM1008 186h1v2h-1zM1014 186h1v2h-1zM1017 186h1v2h-1zM1036 186h1v2h-1zM1014 200h1v2h-1zM1046 200h1v2h-1zM992 224h1v2h-1zM993 226h1v2h-1zM1003 230h1v2h-1zM989 238h2v2h-2zM1027 238h1v2h-1zM1016 242h2v2h-2z" fill="#9CDCFE" fill-opacity="0.26"/><path d="M1004 158h1v2h-1zM994 160h1v2h-1zM1034 160h1v2h-1zM1031 164h1v2h-1zM1020 176h1v2h-1zM1002 178h1v2h-1zM1018 180h1v2h-1zM1041 180h1v2h-1zM1006 182h1v2h-1zM1007 188h1v2h-1zM1003 190h1v2h-1zM1002 194h1v2h-1zM1018 196h1v2h-1zM1045 196h1v2h-1zM1006 198h1v2h-1zM1007 202h1v2h-1zM1003 204h1v2h-1zM1002 206h1v2h-1zM997 212h1v2h-1zM992 214h1v2h-1z" fill="#808080" fill-opacity="0.26"/><path d="M995 160h1v2h-1zM1022 160h1v2h-1zM1027 160h1v2h-1zM1019 180h1v2h-1zM1021 180h1v2h-1zM1029 180h1v2h-1zM1034 180h1v2h-1zM1019 196h1v2h-1zM1035 196h1v2h-1z" fill="#CCCCCC" fill-opacity="0.55"/><path d="M996 160h2v2h-2zM1000 160h2v2h-2zM1003 160h2v2h-2zM1006 160h2v2h-2zM1009 160h2v2h-2zM1013 160h2v2h-2zM1016 160h2v2h-2zM1019 160h2v2h-2zM1023 160h2v2h-2zM1026 160h1v2h-1zM1028 160h2v2h-2zM1020 180h1v2h-1zM1022 180h1v2h-1zM1024 180h1v2h-1zM1026 180h2v2h-2zM1030 180h2v2h-2zM1033 180h1v2h-1zM1035 180h2v2h-2zM1020 196h4v2h-4zM1025 196h1v2h-1zM1027 196h1v2h-1zM1029 196h3v2h-3zM1033 196h1v2h-1zM1037 196h4v2h-4z" fill="#CCCCCC" fill-opacity="0.42"/><path d="M995 164h1v2h-1zM996 212h1v2h-1z" fill="#569CD6" fill-opacity="0.55"/><path d="M997 164h1v2h-1zM1028 184h1v2h-1zM1028 200h1v2h-1zM990 224h1v2h-1zM988 226h1v2h-1zM1001 230h1v2h-1zM1025 238h1v2h-1z" fill="#9CDCFE" fill-opacity="0.55"/></svg>
<div style="position:absolute;left:1050px;top:90px;width:1px;height:608px;background:#121316"></div>
<div style="position:absolute;left:1050px;top:90px;width:14px;height:1px;background:#151515"></div>
<div style="position:absolute;left:1051px;top:541px;width:13px;height:2px;background:#979797"></div>
<div style="position:absolute;left:1064px;top:33px;width:1px;height:665px;background:#2B2B2B"></div>
<div class="t" style="left:1084.5px;top:41.8px;font-size:11.5px;color:#E7E7E7;font-weight:400;letter-spacing:-0.9px">CHAT</div>
<div style="position:absolute;left:1083px;top:61px;width:31px;height:1px;background:#0078D4"></div>
<svg style="position:absolute;left:1190px;top:36px" width="171" height="28" viewBox="1190 36 171 28"><path d="M1210.5 43.8V56.8M1203.9 50.3H1217" stroke="#CCC" stroke-width="1.05"/><path d="M1223.2 48.6 1227.1 52.5 1231 48.6" stroke="#CCC" stroke-width="1.05" fill="none"/><path d="M1248.71 46.17 L1248.92 44.18 L1251.08 44.18 L1251.29 46.17 L1252.50 46.67 L1254.06 45.42 L1255.58 46.94 L1254.33 48.50 L1254.83 49.71 L1256.82 49.92 L1256.82 52.08 L1254.83 52.29 L1254.33 53.50 L1255.58 55.06 L1254.06 56.58 L1252.50 55.33 L1251.29 55.83 L1251.08 57.82 L1248.92 57.82 L1248.71 55.83 L1247.50 55.33 L1245.94 56.58 L1244.42 55.06 L1245.67 53.50 L1245.17 52.29 L1243.18 52.08 L1243.18 49.92 L1245.17 49.71 L1245.67 48.50 L1244.42 46.94 L1245.94 45.42 L1247.50 46.67Z" stroke="#CCC" stroke-width="1.1" fill="none" stroke-linejoin="round"/><circle cx="1250" cy="51" r="1.9" stroke="#CCC" stroke-width="1.1" fill="none"/><circle cx="1271.6" cy="51" r="1.05" fill="#CCC"/><circle cx="1276.1" cy="51" r="1.05" fill="#CCC"/><circle cx="1280.6" cy="51" r="1.05" fill="#CCC"/><path d="M1295.5 43V58.6" stroke="#5A5A5A" stroke-width="1"/><path d="M1309.2 49.2V46.9a1.4 1.4 0 0 1 1.4-1.4H1313M1317.4 45.5H1319.8a1.4 1.4 0 0 1 1.4 1.4V49.2M1321.2 53.4V55.7a1.4 1.4 0 0 1-1.4 1.4H1317.4M1313 57.1H1310.6a1.4 1.4 0 0 1-1.4-1.4V53.4" stroke="#CCC" stroke-width="1.1" fill="none"/><path d="M1336.5 46.2 1346 55.7M1346 46.2 1336.5 55.7" stroke="#CCC" stroke-width="1.1"/></svg>
<svg style="position:absolute;left:1190px;top:248px" width="50" height="45" viewBox="1190 248 50 45"><path d="M1214.6 258.4H1200.3a4.8 4.8 0 0 0-4.8 4.8V275.8a4.8 4.8 0 0 0 4.8 4.8H1203.2V288.2L1211.6 280.6H1223.8a4.8 4.8 0 0 0 4.8-4.8V273.6" stroke="#A8A8A8" stroke-width="2.7" fill="none" stroke-linejoin="round"/><path d="M1223.2 251.6Q1224.3880000000001 257.012 1229.8 258.2Q1224.3880000000001 259.388 1223.2 264.8Q1222.012 259.388 1216.6000000000001 258.2Q1222.012 257.012 1223.2 251.6ZM1229.6 261.8Q1230.5359999999998 266.064 1234.8 267Q1230.5359999999998 267.936 1229.6 272.2Q1228.664 267.936 1224.3999999999999 267Q1228.664 266.064 1229.6 261.8Z" fill="#A8A8A8"/></svg>
<div class="t" style="left:1065px;width:296px;text-align:center;top:320px;font-size:13px;font-weight:700;color:#E0E0E0">Build with Agent</div>
<div class="t" style="left:1065px;width:296px;text-align:center;top:345px;font-size:12px;color:#A0A0A0;letter-spacing:-0.14px">AI responses may be inaccurate</div>
<div class="t" style="left:1065px;width:296px;text-align:center;top:363px;font-size:12px;color:#A0A0A0;letter-spacing:0.14px"><span style="color:#4DAAFC">Generate Agent Instructions</span> to onboard AI</div>
<div class="t" style="left:1065px;width:296px;text-align:center;top:382px;font-size:12px;color:#A0A0A0">onto your codebase.</div>
<div class="t" style="left:1081px;top:532px;font-size:12px;color:#A0A0A0;font-weight:400;">Suggested Actions</div>
<div class="t" style="left:1081px;top:554px;width:101px;height:18px;border:1px solid #353535;border-radius:3px;font-size:12px;line-height:18px;text-align:center;color:#CCCCCC">Build Workspace</div>
<div class="t" style="left:1192px;top:554px;width:80px;height:18px;border:1px solid #353535;border-radius:3px;font-size:12px;line-height:18px;text-align:center;color:#CCCCCC">Show Config</div>
<div style="position:absolute;left:1077px;top:590px;width:273px;height:94px;border:1px solid #383838;border-radius:6px;background:#313131"></div>
<div style="position:absolute;left:1084px;top:597px;width:174px;height:18px;border:1px dashed #4a4a4a;border-radius:3px"></div>
<svg style="position:absolute;left:1089px;top:601px" width="11" height="11" viewBox="0 0 11 11"><path d="M5.5 1v9M1 5.5h9" stroke="#AAA" stroke-width="1"/></svg>
<svg style="position:absolute;left:1104px;top:603px" width="11" height="7.8" viewBox="0 0 14 10"><path fill="#AC7DD8" d="M3.3.3C1.3.3 0 1.8 0 3.7c0 1.3.6 2.3 1.4 2.8v3.2H3V7.1c.4.2.9.2 1.3.1v2.5h2V7.2h2.9v2.5h2.1V6.9c1.5-.4 2.6-1.6 2.6-3.4C13.9 1.5 12.4.3 10.4.3z"/><path d="M6.3.6C6.6 2 6.2 3.6 5 4.6" stroke="#7C58A6" stroke-width=".7" fill="none"/></svg>
<div class="t" style="left:1122px;top:600px;font-size:11px;color:#AAAAAA;font-weight:400;font-style:italic;letter-spacing:-0.05px">boton-whatsapp-basico.php</div>
<div class="t" style="left:1088px;top:628px;font-size:13px;color:#8A8A8A;font-weight:400;letter-spacing:0.2px">Describe what to build next</div>
<svg style="position:absolute;left:1087px;top:660px" width="15" height="15" viewBox="0 0 15 15"><path d="M7.5 1.2v13M1.2 7.5h13" stroke="#CCC" stroke-width="1.1"/></svg>
<svg style="position:absolute;left:1115px;top:661px" width="14" height="14" viewBox="0 0 14 14"><rect x="1.5" y="2" width="11" height="8" rx="1" stroke="#CCC" stroke-width="1.1" fill="none"/><path d="M7 10v2.5M4 12.5h6" stroke="#CCC" stroke-width="1.1"/></svg>
<svg style="position:absolute;left:1135px;top:665px" width="10" height="6" viewBox="0 0 10 6"><path d="M1 1l4 4 4-4" stroke="#CCC" stroke-width="1.1" fill="none"/></svg>
<svg style="position:absolute;left:1158px;top:660px" width="16" height="16" viewBox="1158 660 16 16"><path d="M1164.3 662.8h-1.6a1.4 1.4 0 0 0-1.2.7l-1.8 3.6a1.4 1.4 0 0 0 0 1.2l1.8 3.6a1.4 1.4 0 0 0 1.2.7h.4M1167.7 672.6h1.6a1.4 1.4 0 0 0 1.2-.7l1.8-3.6a1.4 1.4 0 0 0 0-1.2l-1.8-3.6a1.4 1.4 0 0 0-1.2-.7h-.4M1168 662.8l-4 9.8" stroke="#CCC" stroke-width="1.1" fill="none" stroke-linejoin="round"/></svg>
<svg style="position:absolute;left:1179px;top:665px" width="10" height="6" viewBox="0 0 10 6"><path d="M1 1l4 4 4-4" stroke="#CCC" stroke-width="1.1" fill="none"/></svg>
<div class="t" style="left:1203px;top:661px;font-size:12px;color:#CCCCCC;font-weight:400;">Auto</div>
<svg style="position:absolute;left:1231px;top:665px" width="10" height="6" viewBox="0 0 10 6"><path d="M1 1l4 4 4-4" stroke="#CCC" stroke-width="1.1" fill="none"/></svg>
<svg style="position:absolute;left:1252px;top:659px" width="18" height="18" viewBox="1252 659 18 18"><path d="M1256.2 661.6a2.9 2.9 0 0 0-1.4 4.4l1 1.1V673.3a1.3 1.3 0 0 0 2.6 0V667.1l1-1.1a2.9 2.9 0 0 0-1.4-4.4V664.3h-1.8z" stroke="#CCC" stroke-width="1.1" fill="none" stroke-linejoin="round"/><rect x="1262.6" y="661.4" width="4.6" height="13" rx="2.3" stroke="#CCC" stroke-width="1.1" fill="none"/><path d="M1262.6 667.4h4.6" stroke="#CCC" stroke-width="1.1"/></svg>
<svg style="position:absolute;left:1327px;top:661px" width="14" height="14" viewBox="0 0 14 14"><path d="M7 13V1.5M1.8 6.7 7 1.5l5.2 5.2" stroke="#7A7A7A" stroke-width="1.1" fill="none"/></svg>
<div style="position:absolute;left:0;top:698px;width:1361px;height:1px;background:#2B2B2B"></div>
<div style="position:absolute;left:0;top:699px;width:1361px;height:20px;background:#181818"></div>
<svg style="position:absolute;left:0;top:699px" width="30" height="20" viewBox="0 699 30 20"><path d="M9.5 706.5 13.4 710.5 9.5 714.6M18.6 702.3 14.4 706.5 18.6 710.7" stroke="#CCC" stroke-width="1.15" fill="none"/></svg>
<svg style="position:absolute;left:38px;top:701px" width="16" height="16" viewBox="0 0 16 16"><circle cx="8" cy="8" r="6.7" stroke="#CCC" stroke-width="1.1" fill="none"/><path d="M5.3 5.3l5.4 5.4M10.7 5.3l-5.4 5.4" stroke="#CCC" stroke-width="1.1"/></svg>
<div class="t" style="left:56.5px;top:701.5px;font-size:12px;color:#CCCCCC;font-weight:400;">0</div>
<svg style="position:absolute;left:66px;top:701px" width="16" height="16" viewBox="0 0 16 16"><path d="M8 1.8 14.8 14.2H1.2z" stroke="#CCC" stroke-width="1.1" fill="none" stroke-linejoin="round"/><path d="M8 6v4.3M8 11.5v1.2" stroke="#CCC" stroke-width="1.1"/></svg>
<div class="t" style="left:84.5px;top:701.5px;font-size:12px;color:#CCCCCC;font-weight:400;">0</div>
<div style="position:absolute;left:112px;top:705px;width:8px;height:8px;border-radius:4px;background:#0078D4"></div>
<div class="t" style="left:127px;top:701.5px;font-size:12px;color:#CCCCCC;font-weight:400;">Update available, click to download.</div>
<div class="t" style="left:1014.5px;top:701.5px;font-size:12px;color:#CCCCCC;font-weight:400;">Ln 94, Col 54</div>
<div class="t" style="left:1099.5px;top:701.5px;font-size:12px;color:#CCCCCC;font-weight:400;">Tab Size: 4</div>
<div class="t" style="left:1171.5px;top:701.5px;font-size:12px;color:#CCCCCC;font-weight:400;">UTF-8</div>
<div class="t" style="left:1219px;top:701.5px;font-size:12px;color:#CCCCCC;font-weight:400;">LF</div>
<div class="t" style="left:1248.5px;top:701.5px;font-size:12px;color:#CCCCCC;font-weight:400;">{ }</div>
<div class="t" style="left:1269.5px;top:701.5px;font-size:12px;color:#CCCCCC;font-weight:400;">PHP</div>
<svg style="position:absolute;left:1300px;top:699px" width="30" height="20" viewBox="1300 699 30 20"><g stroke="#D0D0D0" stroke-width="1.2" fill="none"><circle cx="1313.2" cy="705.4" r="2.7"/><circle cx="1318.9" cy="705.4" r="2.7"/><path d="M1310 708.6C1308.6 709.5 1308.1 711 1308.5 712.6 1309.1 714.8 1311.6 715.8 1316.1 715.8S1323.1 714.8 1323.7 712.6C1324.1 711 1323.6 709.5 1322.2 708.6"/><rect x="1311.3" y="709.1" width="9.6" height="5.1" rx="1.6"/><path d="M1314.7 710.6v2.3M1317.6 710.6v2.3" stroke-width="1.1"/></g></svg>
<div style="position:absolute;left:1332px;top:699px;width:29px;height:20px;background:#3C3C3C"></div>
<svg style="position:absolute;left:1340px;top:701px" width="16" height="16" viewBox="0 0 16 16"><path d="M8 1.5c-2.6 0-4.5 2-4.5 4.6v3.6L2 12.2h12l-1.5-2.5V6.1C12.5 3.5 10.6 1.5 8 1.5z" stroke="#CCC" stroke-width="1.1" fill="none" stroke-linejoin="round"/><path d="M6.3 13.8a1.8 1.8 0 0 0 3.4 0" stroke="#CCC" stroke-width="1.1" fill="none"/></svg>
</body></html>
